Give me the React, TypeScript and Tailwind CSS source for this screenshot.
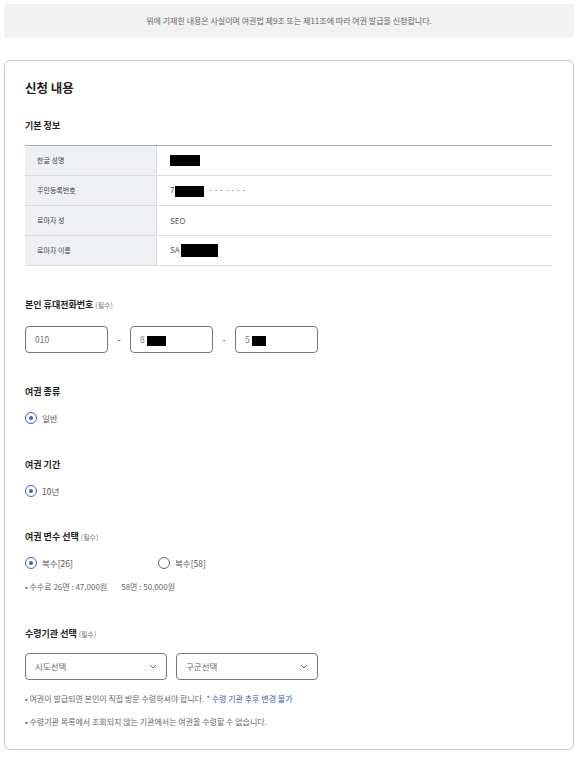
import React from 'react';

const font = { fontFamily: '"Noto Sans CJK KR", "Noto Sans", sans-serif' };

function Radio({ checked, label }: { checked?: boolean; label: string }) {
  return (
    <label className="flex items-center gap-[5px] text-[8.5px] text-[#555] leading-[12px]">
      <span
        className={`flex h-[12px] w-[12px] items-center justify-center rounded-full border ${
          checked ? 'border-[#3b63c4]' : 'border-[#666]'
        } bg-white`}
      >
        {checked && <span className="h-[4px] w-[4px] rounded-full bg-[#3b63c4]" />}
      </span>
      {label}
    </label>
  );
}

function Label({ text, req }: { text: string; req?: boolean }) {
  return (
    <div className="text-[9px] font-bold leading-[12px] text-[#222]">
      {text}
      {req && <span className="ml-[2px] text-[7px] font-normal text-[#777]">(필수)</span>}
    </div>
  );
}

function Black({ w, h = 11 }: { w: number; h?: number }) {
  return <span className="inline-block bg-black align-middle" style={{ width: w, height: h }} />;
}

function Chevron() {
  return (
    <svg width="8" height="5" viewBox="0 0 8 5" fill="none">
      <path d="M1 1l3 3 3-3" stroke="#666" strokeWidth="1" />
    </svg>
  );
}

export default function App() {
  const rows: { label: string; value: React.ReactNode }[] = [
    { label: '한글 성명', value: <Black w={30} /> },
    {
      label: '주민등록번호',
      value: (
        <span className="flex items-center">
          7<span className="ml-[1px]"><Black w={29} /></span>
          <span className="ml-[4px] tracking-[1px]">·······</span>
        </span>
      ),
    },
    { label: '로마자 성', value: 'SEO' },
    {
      label: '로마자 이름',
      value: (
        <span className="flex items-center">
          SA<span className="ml-[1px]"><Black w={37} h={13} /></span>
        </span>
      ),
    },
  ];

  return (
    <div className="min-h-[773px] w-[578px] bg-white px-[4px] pt-[4px]" style={font}>
      <div className="flex h-[34px] items-center justify-center rounded-[4px] bg-[#f2f2f2] text-[8px] text-[#666]">
        위에 기재한 내용은 사실이며 여권법 제9조 또는 제11조에 따라 여권 발급을 신청합니다.
      </div>

      <div className="mt-[22px] rounded-[6px] border border-[#c8c8c8] pb-[22px] pl-[20px] pr-[21px] pt-[19px]">
        <div className="text-[12.5px] font-bold leading-[16px] text-[#222]">신청 내용</div>

        <div className="mt-[24px]">
          <Label text="기본 정보" />
        </div>

        <div className="mt-[13px] border-t border-[#a3afbf]">
          {rows.map((r) => (
            <div key={r.label} className="flex h-[30px] border-b border-[#dcdcdc]">
              <div className="flex w-[132px] items-center border-r border-[#dcdcdc] bg-[#eef0f4] pl-[12px] text-[7px] text-[#444]">
                {r.label}
              </div>
              <div className="flex items-center pl-[13px] text-[8px] text-[#555]">{r.value}</div>
            </div>
          ))}
        </div>

        <div className="mt-[33px]">
          <Label text="본인 휴대전화번호" req />
        </div>
        <div className="mt-[15px] flex items-center">
          <div className="flex h-[27px] w-[83px] items-center rounded-[4px] border border-[#777] pl-[9px] text-[8.5px] text-[#777]">
            010
          </div>
          <span className="w-[22px] text-center text-[9px] text-[#333]">-</span>
          <div className="flex h-[27px] w-[83px] items-center rounded-[4px] border border-[#777] pl-[9px] text-[8.5px] text-[#777]">
            8<span className="ml-[2px]"><Black w={19} h={10} /></span>
          </div>
          <span className="w-[22px] text-center text-[9px] text-[#333]">-</span>
          <div className="flex h-[27px] w-[83px] items-center rounded-[4px] border border-[#777] pl-[9px] text-[8.5px] text-[#777]">
            5<span className="ml-[2px]"><Black w={14} h={10} /></span>
          </div>
        </div>

        <div className="mt-[33px]">
          <Label text="여권 종류" />
        </div>
        <div className="mt-[14px]">
          <Radio checked label="일반" />
        </div>

        <div className="mt-[35px]">
          <Label text="여권 기간" />
        </div>
        <div className="mt-[14px]">
          <Radio checked label="10년" />
        </div>

        <div className="mt-[34px]">
          <Label text="여권 면수 선택" req />
        </div>
        <div className="mt-[14px] flex">
          <div className="w-[133px]">
            <Radio checked label="복수[26]" />
          </div>
          <Radio label="복수[58]" />
        </div>
        <div className="mt-[13px] text-[8px] leading-[10px] text-[#666]">
          • 수수료 26면 : 47,000원<span className="ml-[14px]">58면 : 50,000원</span>
        </div>

        <div className="mt-[36px]">
          <Label text="수령기관 선택" req />
        </div>
        <div className="mt-[13px] flex gap-[9px]">
          <div className="flex h-[27px] w-[142px] items-center justify-between rounded-[4px] border border-[#777] pl-[9px] pr-[9px] text-[8.5px] text-[#666]">
            시도선택
            <Chevron />
          </div>
          <div className="flex h-[27px] w-[142px] items-center justify-between rounded-[4px] border border-[#777] pl-[9px] pr-[9px] text-[8.5px] text-[#666]">
            구군선택
            <Chevron />
          </div>
        </div>
        <div className="mt-[14px] text-[8px] leading-[10px] text-[#666]">
          • 여권이 발급되면 본인이 직접 방문 수령하셔야 합니다.{' '}
          <span className="text-[#3b5cb8]">* 수령 기관 추후 변경 불가</span>
        </div>
        <div className="mt-[13px] text-[8px] leading-[10px] text-[#666]">
          • 수령기관 목록에서 조회되지 않는 기관에서는 여권을 수령할 수 없습니다.
        </div>
      </div>
    </div>
  );
}
